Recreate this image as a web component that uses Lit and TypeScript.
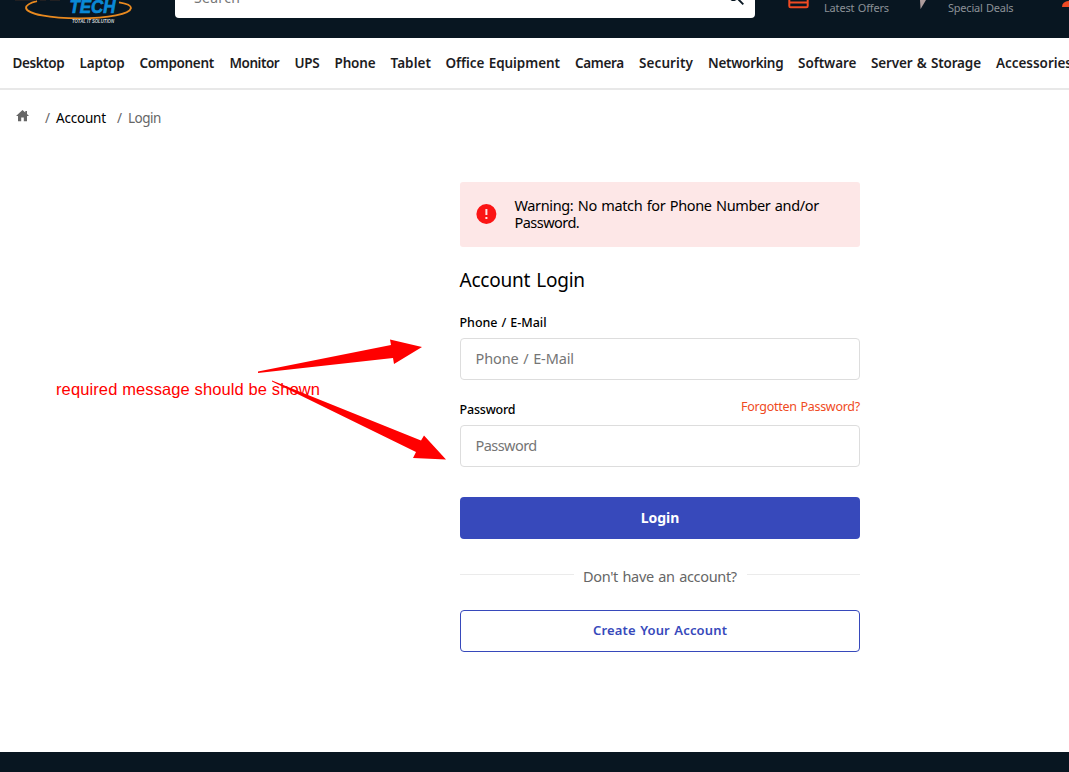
import { LitElement, html, css, svg } from "lit";
import { customElement, property } from "lit/decorators.js";

/** One line of text whose tracking is adjusted so that it fills a given width. */
@customElement("fit-text")
class FitText extends LitElement {
  @property({ type: Number }) w = 0;
  static styles = css`
    :host { display: inline-block; white-space: pre; flex: none; word-spacing: 0.07em; }
    .t { display: inline-block; }
  `;
  render() {
    return html`<span class="t"><slot></slot></span>`;
  }
  firstUpdated() {
    const n = (this.textContent || "").length;
    const t = this.renderRoot.querySelector(".t") as HTMLElement;
    const natural = t.getBoundingClientRect().width;
    this.style.width = this.w + "px";
    if (n > 1) t.style.letterSpacing = (this.w - natural) / (n - 0.5) + "px";
  }
}

const NAV: [string, number, number][] = [
  ["Desktop", 52, 15], ["Laptop", 45, 15], ["Component", 74.5, 15.5], ["Monitor", 50, 15],
  ["UPS", 25, 15], ["Phone", 41, 15], ["Tablet", 40.5, 14.5], ["Office Equipment", 114.5, 15],
  ["Camera", 49, 15], ["Security", 54, 15], ["Networking", 75.5, 14.5], ["Software", 58.5, 14.5],
  ["Server & Storage", 110, 15], ["Accessories", 76, 0],
];

@customElement("app-root")
class AppRoot extends LitElement {
  static styles = css`
    :host {
      display: flex; flex-direction: column; position: relative;
      height: 772px; width: 100%; overflow: hidden; background: #fff; color: #000;
      font-family: "Noto Sans", "Open Sans", sans-serif;
    }
    * { box-sizing: border-box; }
    .top { height: 38px; background: #081621; display: flex; flex: none; align-items: flex-start; overflow: hidden; }
    .logo { width: 150px; height: 38px; flex: none; }
    .search { width: 580px; height: 18px; margin-left: 25px; background: #fff; border-radius: 0 0 4px 4px;
      display: flex; justify-content: space-between; padding: 0 9px 0 19px; overflow: hidden; flex: none; }
    .search fit-text { font-size: 14px; line-height: 20px; margin-top: -12px; color: #777; height: 20px; }
    .search svg { display: block; }
    .icon { display: block; flex: none; }
    .offers { margin-left: 33px; }
    .small { font-size: 11px; line-height: 16px; color: #8b9197; }
    .small.a { margin-left: 15px; }
    .bolt { margin-left: 29px; }
    .small.b { margin-left: 20px; }
    .user { margin-left: 47px; }
    .nav { height: 52px; flex: none; display: flex; align-items: center; padding-left: 12.5px; border-bottom: 2px solid #e8e8e8;
      font-size: 13.5px; font-weight: 600; line-height: 20px; color: #1d1d1f; overflow: hidden; }
    .item { display: flex; flex: none; }
    .crumbs { display: flex; height: 54px; flex: none; padding-left: 16px; align-items: center; font-size: 13.5px; color: #666; line-height: 20px; padding-top: 1px; }
    .crumbs .acc { color: #000; margin: 0 11px 0 6px; }
    .crumbs .sl { margin-left: 16px; }
    .crumbs .lg { margin-left: 6px; }
    .home { margin-top: -4px; }
    .panel { width: 400px; margin: 38px 0 0 460px; flex: none; display: flex; flex-direction: column; }
    .alert { height: 65px; background: #fde7e7; border-radius: 3px; display: flex; align-items: center; padding: 0 0 2px 16px; flex: none; }
    .msg { display: flex; flex-direction: column; margin-left: 17.5px; font-size: 14.5px; line-height: 17px; }
    h1 { margin: 20px 0 0 -0.5px; font-size: 19px; line-height: 26px; font-weight: 400; height: 26px; display: flex; }
    .row { display: flex; justify-content: space-between; align-items: flex-start; height: 20px; margin: 20px 0 0 -0.5px; font-size: 12.5px; line-height: 20px; }
    .label { font-weight: 500; }
    .forgot { color: #ef4a23; margin-top: -3px; }
    .field { height: 42px; margin-top: 5px; border: 1px solid #ddd; border-radius: 4px; display: flex; align-items: center; padding: 0 0 2px 14.5px;
      font-size: 14.5px; color: #757575; line-height: 20px; }
    .btn { height: 42px; border-radius: 4px; display: flex; align-items: center; justify-content: center; font-size: 14px; font-weight: 700; line-height: 20px; }
    .primary { background: #3749bb; color: #fff; margin-top: 30px; }
    .outline { border: 1px solid #3749bb; color: #3749bb; margin-top: 24px; font-size: 13px; font-weight: 600; padding-bottom: 2px; }
    .or { display: flex; align-items: center; height: 20px; margin-top: 27px; font-size: 14.5px; line-height: 20px; color: #666; gap: 9.5px; }
    .or i { flex: 1; height: 1px; background: #ebebeb; margin-top: -3px; }
    .foot { height: 20px; flex: none; margin-top: auto; background: #081621; }
    .notes { position: absolute; left: 0; top: 0; pointer-events: none; }
    .note { font-family: "Liberation Sans", Arial, sans-serif; font-size: 16.5px; fill: #f00; }
    .brand { font-family: "Liberation Sans", Arial, sans-serif; font-weight: 700; }
  `;

  logo() {
    return svg`
      <path d="M37 1.2 C30 3 26 5 26 8 C27 14 50 18.4 79 18.4 C109 18.4 130 14 131 8 C131 5.5 127 3.5 119 2.3" fill="none" stroke="#e8891f" stroke-width="1.8"/>
      <path d="M15 0H36M40 0H46M50 0H60" stroke="#2a2423" stroke-width="1.4"/>
      <text class="brand" x="69.5" y="13.2" font-size="17.5" font-style="italic" fill="#0a89d6" stroke="#0a89d6" stroke-width=".7" textLength="46" lengthAdjust="spacingAndGlyphs">TECH</text>
      <text class="brand" x="72" y="22.6" font-size="4.8" font-style="italic" fill="#cfd3d6" textLength="42" lengthAdjust="spacingAndGlyphs">TOTAL IT SOLUTION</text>`;
  }

  render() {
    return html`
      <header class="top">
        <svg class="logo" viewBox="0 0 150 38">${this.logo()}</svg>
        <div class="search">
          <fit-text w="46">Search</fit-text>
          <svg width="20" height="10" viewBox="0 0 20 10"><path d="M4.5 0H10.5L8.5 1.1H6Z" fill="#081621"/><path d="M11.5 -1.5L17.3 4.3" fill="none" stroke="#081621" stroke-width="1.9"/></svg>
        </div>
        <svg class="icon offers" width="21" height="10" viewBox="0 0 21 10"><path d="M1.3 -2V6Q1.3 7.2 2.6 7.2H18.4Q19.7 7.2 19.7 6V-2M1 2.6H20" fill="none" stroke="#ef4a23" stroke-width="2"/></svg>
        <fit-text class="small a" w="65">Latest Offers</fit-text>
        <svg class="icon bolt" width="10" height="10" viewBox="0 0 10 10"><path d="M2 0H8L2.6 9Z" fill="#ad9c9c"/></svg>
        <fit-text class="small b" w="65.5">Special Deals</fit-text>
        <svg class="icon user" width="20" height="10" viewBox="0 0 20 10"><path d="M1 7Q1 1.5 8 .8H20V7Z" fill="#ef4a23"/></svg>
      </header>
      <nav class="nav">
        ${NAV.map(([t, w, g]) => html`<span class="item" style="margin-right:${g}px"><fit-text w=${w}>${t}</fit-text></span>`)}
      </nav>
      <div class="crumbs">
        <svg class="icon home" width="13" height="12" viewBox="0 0 13 12"><path d="M6.5 0L0 6H2V11.3H5.2V7.5H7.8V11.3H11V6H13L11 4.1V1H9.3V2.6Z" fill="#666"/></svg>
        <fit-text class="sl" w="5">/</fit-text><fit-text class="acc" w="50">Account</fit-text>
        <fit-text w="5">/</fit-text><fit-text class="lg" w="33">Login</fit-text>
      </div>
      <main class="panel">
        <div class="alert">
          <svg class="icon" width="21" height="20" viewBox="0 0 21 20"><circle cx="10.4" cy="10" r="10" fill="#fb1515"/><path d="M9.4 5H11.4V11H9.4ZM9.4 13H11.4V15H9.4Z" fill="#fde7e7"/></svg>
          <div class="msg"><fit-text w="304.5">Warning: No match for Phone Number and/or</fit-text><fit-text w="65">Password.</fit-text></div>
        </div>
        <h1><fit-text w="125.5">Account Login</fit-text></h1>
        <div class="row"><fit-text class="label" w="87">Phone / E-Mail</fit-text></div>
        <div class="field"><fit-text w="98.5">Phone / E-Mail</fit-text></div>
        <div class="row"><fit-text class="label" w="56">Password</fit-text><fit-text class="forgot" w="119">Forgotten Password?</fit-text></div>
        <div class="field"><fit-text w="61.5">Password</fit-text></div>
        <div class="btn primary"><fit-text w="38.5">Login</fit-text></div>
        <div class="or"><i></i><fit-text w="154">Don't have an account?</fit-text><i></i></div>
        <div class="btn outline"><fit-text w="134">Create Your Account</fit-text></div>
      </main>
      <footer class="foot"></footer>
      <svg class="notes" width="1069" height="772" viewBox="0 0 1069 772">
        <text class="note" x="56" y="395" textLength="264">required message should be shown</text>
        <path d="M258 371.5L391 345L390 339.5L422 347L394 364L393 358L258 373Z" fill="#f00"/>
        <path d="M272 380.5L421 440.5L424 435.5L446 459.5L413 458L416 452L272 381.5Z" fill="#f00"/>
      </svg>
    `;
  }
}
